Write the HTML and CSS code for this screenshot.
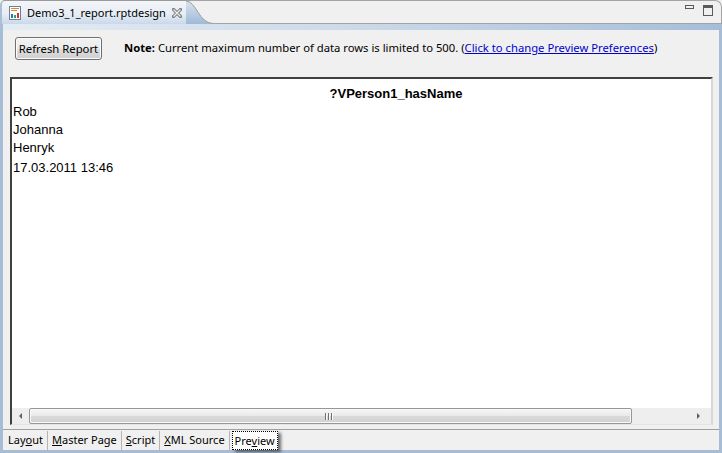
FILE: index.html
```html
<!DOCTYPE html>
<html>
<head>
<meta charset="utf-8">
<link rel="stylesheet" href="styles.css">
</head>
<body>
<div class="tabbar">
  <div class="tab">
    <svg class="tab-icon" width="16" height="16" viewBox="0 0 16 16">
      <rect x="2.5" y="1.5" width="11" height="13" fill="#fff" stroke="#6b7f99"/>
      <rect x="4" y="3" width="8" height="1" fill="#d98a2b"/>
      <rect x="4" y="5" width="6" height="1" fill="#d98a2b"/>
      <rect x="4" y="9" width="2" height="4" fill="#2a6fd6"/>
      <rect x="7" y="10" width="2" height="3" fill="#2fa84a"/>
      <rect x="10" y="8" width="2" height="5" fill="#d83030"/>
    </svg>
    <span class="tab-label">Demo3_1_report.rptdesign</span>
    <svg class="tab-close" width="10" height="10" viewBox="0 0 10 10">
      <path d="M1.5 1.5 L8.5 8.5 M8.5 1.5 L1.5 8.5" stroke="#7c7c7c" stroke-width="3.2" stroke-linecap="square"/>
      <path d="M1.5 1.5 L8.5 8.5 M8.5 1.5 L1.5 8.5" stroke="#ececec" stroke-width="1.3"/>
    </svg>
  </div>
  <svg class="curve" width="27" height="24" viewBox="0 0 27 24">
    <defs>
      <linearGradient id="cg" x1="0" y1="0" x2="0" y2="1">
        <stop offset="0" stop-color="#d9e3ee"/>
        <stop offset="1" stop-color="#9fb9d8"/>
      </linearGradient>
    </defs>
    <path d="M0 1 C10 1 13 23.5 27 23.5 L27 24 L0 24 Z" fill="url(#cg)"/>
    <path d="M0 1 C10 1 13 23.5 27 23.5" fill="none" stroke="#9a9a9a"/>
    <path d="M0 0.5 L27 0.5" stroke="#a4a4a4"/>
  </svg>
  <div class="tabfill">
    <svg width="10" height="4" viewBox="0 0 10 4"><rect x="0.5" y="0.5" width="8" height="3" fill="none" stroke="#5a5a5a"/></svg>
    <svg width="10" height="11" viewBox="0 0 10 11"><rect x="0.5" y="0.5" width="9" height="10" fill="none" stroke="#5a5a5a"/><rect x="0" y="1" width="10" height="2" fill="#5a5a5a"/></svg>
  </div>
</div>
<div class="frame">
  <div class="strip"></div>
  <div class="toolbar">
    <button class="btn">Refresh Report</button>
    <div class="note"><b>Note:</b> Current maximum number of data rows is limited to 500. (<a class="link" href="#">Click to change Preview Preferences</a>)</div>
  </div>
  <div class="report">
    <div class="canvas">
      <div class="rtable">
        <div class="rhead">?VPerson1_hasName</div>
        <div class="rrow">Rob</div>
        <div class="rrow">Johanna</div>
        <div class="rrow">Henryk</div>
        <div class="rrow date">17.03.2011 13:46</div>
      </div>
    </div>
    <div class="hscroll">
      <div class="arrow-btn"><span class="tri-left"></span></div>
      <div class="thumb"><span class="grip"><i></i><i></i><i></i></span></div>
      <div class="track"></div>
      <div class="arrow-btn right"><span class="tri-right"></span></div>
    </div>
  </div>
  <div class="btabs">
    <div class="btab">Lay<u>o</u>ut</div>
    <div class="btab"><u>M</u>aster Page</div>
    <div class="btab"><u>S</u>cript</div>
    <div class="btab"><u>X</u>ML Source</div>
    <div class="btab active">Pre<u>v</u>iew</div>
  </div>
</div>
</body>
</html>
```

FILE: styles.css
```css
* { box-sizing: border-box; }
html, body { margin: 0; padding: 0; }
body {
  width: 722px;
  height: 453px;
  overflow: hidden;
  background: #f0f0f0;
  font-family: "Noto Sans", "Open Sans", sans-serif;
  font-size: 11px;
  color: #000;
}

/* top tab row */
.tabbar {
  display: flex;
  height: 24px;
}
.tab {
  width: 186px;
  height: 24px;
  display: flex;
  align-items: center;
  padding-left: 5px;
  border-top: 1px solid #9a9a9a;
  border-left: 2px solid #a9bfd6;
  border-top-left-radius: 5px;
  background: linear-gradient(to bottom, #f3f5f8 0%, #e8eef5 55%, #c9d8ea 100%);
}
.tab-icon { flex: none; }
.tab-label {
  margin-left: 4px;
  font-size: 11px;
  color: #000;
}
.tab-close { margin-left: 6px; flex: none; }
.curve { flex: none; display: block; }
.tabfill {
  flex: 1;
  height: 24px;
  border-top: 1px solid #a4a4a4;
  border-right: 1px solid #a4a4a4;
  border-bottom: 1px solid #a4a4a4;
  border-top-right-radius: 7px;
  display: flex;
  justify-content: flex-end;
  align-items: flex-start;
  gap: 8px;
  padding: 4px 8px 0 0;
}

/* frame */
.frame {
  height: 429px;
  border: solid #a7bdd5;
  border-width: 0 3px 3px 3px;
  display: flex;
  flex-direction: column;
}
.strip {
  height: 6px;
  background: linear-gradient(to right, #e4ebf3 0%, #cfdbe9 45%, #a6bedb 100%);
}
.toolbar {
  height: 47px;
  padding: 7px 0 0 12px;
  display: flex;
  align-items: flex-start;
  gap: 22px;
}
.btn {
  width: 87px;
  height: 23px;
  padding: 0;
  font-family: inherit;
  font-size: 11.3px;
  color: #000;
  border: 1px solid #707070;
  border-radius: 3px;
  background: linear-gradient(to bottom, #f2f2f2 0%, #ebebeb 50%, #dddddd 51%, #cfcfcf 100%);
  box-shadow: inset 0 0 0 1px #fcfcfc;
}
.note {
  height: 23px;
  line-height: 21px;
  font-size: 11.25px;
  white-space: nowrap;
}
.link { color: #0000cc; text-decoration: underline; }

/* report area */
.report {
  margin: 0 6px 0 7px;
  height: 348px;
  border-top: 2px solid #404040;
  border-left: 2px solid #404040;
  border-right: 2px solid #d8d8d8;
  border-bottom: 1px solid #e4e4e4;
  background: #fff;
  display: flex;
  flex-direction: column;
}
.canvas {
  flex: 1;
  overflow: hidden;
  padding: 6px 0 0 1px;
}
.rtable {
  width: 766px;
  font-family: "Liberation Sans", Arial, sans-serif;
  font-size: 13px;
  line-height: 18px;
}
.rhead { text-align: center; font-weight: bold; }
.rrow.date { margin-top: 2px; }

.hscroll {
  height: 16px;
  display: flex;
  background: #eeeeee;
}
.arrow-btn {
  width: 17px;
  display: flex;
  align-items: center;
  justify-content: center;
}
.arrow-btn.right { width: 14px; justify-content: flex-start; }
.tri-left {
  width: 0; height: 0;
  border-top: 3px solid transparent;
  border-bottom: 3px solid transparent;
  border-right: 3px solid #606060;
}
.tri-right {
  width: 0; height: 0;
  border-top: 3px solid transparent;
  border-bottom: 3px solid transparent;
  border-left: 3px solid #606060;
}
.thumb {
  width: 603px;
  margin: 0;
  border: 1px solid #979797;
  border-radius: 2px;
  background: linear-gradient(to bottom, #f6f6f6 0%, #e9e9e9 50%, #d9d9d9 51%, #d2d2d2 100%);
  box-shadow: inset 0 0 0 1px #f8f8f8;
  display: flex;
  align-items: center;
  padding-left: 295px;
}
.grip { display: flex; gap: 2px; }
.grip i {
  display: block;
  width: 1px;
  height: 7px;
  background: #6f6f6f;
  box-shadow: 1px 0 0 #fafafa;
}
.track { flex: 1; }

/* bottom tabs */
.btabs {
  margin-top: 4px;
  height: 21px;
  border-top: 1px solid #a0a0a0;
  display: flex;
  padding-left: 3px;
  font-size: 11px;
}
.btab {
  padding: 0 4px 0 2px;
  line-height: 18px;
  border-right: 1px solid #b4b4b4;
  margin-right: 2px;
  height: 19px;
  margin-top: 1px;
}
.btab u { text-decoration: underline; }
.btab.active {
  border: 1px dotted #000;
  background: #fff;
  margin-top: 1px;
  height: 19px;
  padding: 0 2px 0 2px;
  box-shadow: 3px 2px 3px rgba(0,0,0,0.55);
}
```
